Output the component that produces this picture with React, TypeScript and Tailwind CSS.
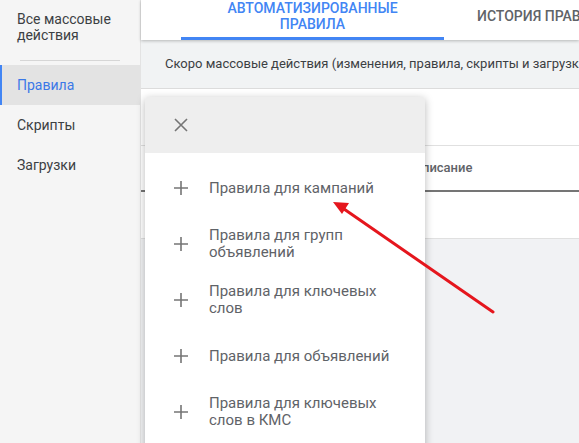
import React from "react";

const PlusIcon = () => (
  <svg width="16" height="16" viewBox="0 0 16 16" className="shrink-0">
    <path d="M8 1v14M1 8h14" stroke="#757575" strokeWidth="1.6" fill="none" />
  </svg>
);

const items = [
  ["Правила для кампаний"],
  ["Правила для групп", "объявлений"],
  ["Правила для ключевых", "слов"],
  ["Правила для объявлений"],
  ["Правила для ключевых", "слов в КМС"],
];

export default function App() {
  return (
    <div className="relative w-[579px] h-[443px] overflow-hidden flex bg-white font-['Roboto',sans-serif]">
      <aside className="w-[141px] shrink-0 bg-[#f5f5f5] border-r border-[#e3e3e3] flex flex-col">
        <div className="pl-[17px] pt-[11px] text-[14px] leading-[16px] text-[#3c4043]">
          Все массовые
          <br />
          действия
        </div>
        <div className="mx-[20px] mt-[17px] mb-[4px] border-t border-[#d6d6d6]" />
        <div className="h-[40px] flex items-center pl-[15px] border-l-[2px] border-[#4285f4] bg-[#e3e3e3] text-[14px] text-[#3b78e7]">
          Правила
        </div>
        <div className="h-[40px] flex items-center pl-[17px] text-[14px] text-[#3c4043]">Скрипты</div>
        <div className="h-[40px] flex items-center pl-[17px] text-[14px] text-[#3c4043]">Загрузки</div>
      </aside>

      <main className="flex-1 min-w-0 flex flex-col">
        <div className="relative z-10 h-[40px] shrink-0 flex bg-white pl-[40px] shadow-[0_1px_3px_rgba(0,0,0,0.25)] whitespace-nowrap">
          <div className="w-[263px] shrink-0 flex flex-col items-center justify-start border-b-[3px] border-[#4285f4] pt-[0px] text-[14px] leading-[16px] font-medium text-[#4285f4]">
            <span>АВТОМАТИЗИРОВАННЫЕ</span>
            <span>ПРАВИЛА</span>
          </div>
          <div className="flex items-center pl-[33px] pb-[8px] text-[14px] font-medium text-[#5f6368]">
            ИСТОРИЯ ПРАВИЛ
          </div>
        </div>
        <div className="h-[49px] shrink-0 flex items-center bg-[#f1f3f4] border-b border-[#dcdcdc] pl-[24px] whitespace-nowrap text-[13px] text-[#3c4043]">
          Скоро массовые действия (изменения, правила, скрипты и загрузки) будут доступны
        </div>
        <div className="h-[57px] shrink-0 border-b border-[#e0e0e0]" />
        <div className="h-[46px] shrink-0 flex items-center border-b-[2px] border-[#757575] pl-[272px] text-[13px] font-medium text-[#5f6368]">
          Описание
        </div>
        <div className="h-[47px] shrink-0 border-b border-[#e0e0e0]" />
        <div className="flex-1 bg-[#f1f2f4]" />
      </main>

      <div className="absolute left-[145px] top-[97px] w-[280px] h-[360px] bg-white rounded-t-[2px] shadow-[0_2px_8px_rgba(0,0,0,0.28)] flex flex-col">
        <div className="h-[56px] shrink-0 bg-[#eeeeee] flex items-center pl-[29px] rounded-t-[2px]">
          <svg width="14" height="14" viewBox="0 0 14 14">
            <path d="M1 1l12 12M13 1L1 13" stroke="#757575" strokeWidth="1.6" fill="none" />
          </svg>
        </div>
        <div className="pt-[7px] flex flex-col">
          {items.map((lines, i) => (
            <div key={i} className="h-[56px] flex items-center gap-[20px] pl-[28px]">
              <PlusIcon />
              <div className="text-[15px] leading-[17px] text-[#5f6368]">
                {lines.map((l, j) => (
                  <div key={j}>{l}</div>
                ))}
              </div>
            </div>
          ))}
        </div>
      </div>

      <svg className="absolute inset-0 pointer-events-none" width="579" height="443" viewBox="0 0 579 443">
        <line x1="493" y1="312" x2="344" y2="209" stroke="#e5161d" strokeWidth="3" strokeLinecap="round" />
        <polygon points="333,202 349,203 342,214" fill="#e5161d" />
      </svg>
    </div>
  );
}
